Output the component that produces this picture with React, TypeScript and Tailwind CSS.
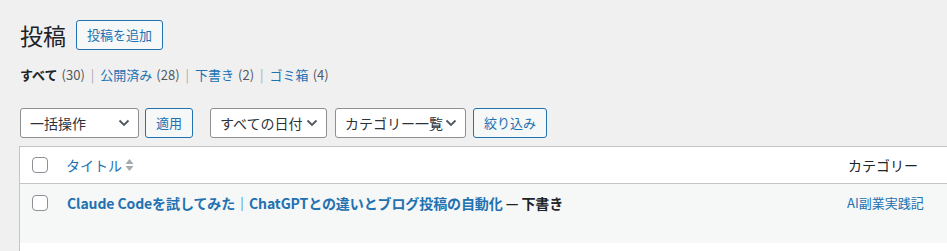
const font = { fontFamily: '"Noto Sans CJK JP", "Noto Sans", sans-serif' };

function Chevron() {
  return (
    <svg width="12" height="8" viewBox="0 0 12 8" className="shrink-0">
      <path d="M1.5 1.5 L6 6 L10.5 1.5" fill="none" stroke="#50575e" strokeWidth="1.8" />
    </svg>
  );
}

function Select({ label, width }: { label: string; width: string }) {
  return (
    <div
      className={`flex h-[30px] items-center justify-between whitespace-nowrap rounded-[3px] border border-[#8c8f94] bg-white pl-[9px] pr-[8px] text-[14px] text-[#2c3338] ${width}`}
    >
      <span>{label}</span>
      <Chevron />
    </div>
  );
}

function Button({ label }: { label: string }) {
  return (
    <div className="flex h-[30px] items-center justify-center whitespace-nowrap rounded-[3px] border border-[#2271b1] bg-[#f6f7f7] text-[13px] text-[#2271b1]">
      {label}
    </div>
  );
}

function Checkbox() {
  return <div className="h-4 w-4 shrink-0 rounded-[4px] border border-[#8c8f94] bg-white" />;
}

export default function App() {
  return (
    <div className="h-[251px] w-[947px] overflow-hidden bg-[#f0f0f1] pl-[20px]" style={font}>
      <div className="flex items-center gap-[10px] pt-[20px]">
        <h1 className="text-[23px] leading-[29px] text-[#1d2327]">投稿</h1>
        <div className="flex h-[30px] items-center rounded-[3px] border border-[#2271b1] bg-[#f6f7f7] px-[10px] text-[13px] text-[#2271b1]">
          投稿を追加
        </div>
      </div>

      <div className="mt-[15px] flex items-center whitespace-nowrap text-[13px] leading-[20px] text-[#50575e]">
        <span className="font-bold text-[#1d2327]">すべて</span>
        <span className="ml-1">(30)</span>
        <span className="mx-[6px] text-[#a7aaad]">|</span>
        <span className="text-[#2271b1]">公開済み</span>
        <span className="ml-1">(28)</span>
        <span className="mx-[6px] text-[#a7aaad]">|</span>
        <span className="text-[#2271b1]">下書き</span>
        <span className="ml-1">(2)</span>
        <span className="mx-[6px] text-[#a7aaad]">|</span>
        <span className="text-[#2271b1]">ゴミ箱</span>
        <span className="ml-1">(4)</span>
      </div>

      <div className="mt-[23px] flex items-center">
        <Select label="一括操作" width="w-[119px]" />
        <div className="ml-[6px] w-[48px]">
          <Button label="適用" />
        </div>
        <div className="ml-[17px]">
          <Select label="すべての日付" width="w-[117px]" />
        </div>
        <div className="ml-[8px]">
          <Select label="カテゴリー一覧" width="w-[131px]" />
        </div>
        <div className="ml-[7px] w-[74px]">
          <Button label="絞り込み" />
        </div>
      </div>

      <div className="-ml-[1px] mt-[8px] border-l border-t border-[#c3c4c7] bg-white">
        <div className="flex h-[37px] items-center border-b border-[#c3c4c7] bg-white">
          <div className="pl-[12px]">
            <Checkbox />
          </div>
          <div className="ml-[18px] flex items-center gap-[3px] text-[14px] text-[#2271b1]">
            <span>タイトル</span>
            <svg width="9" height="14" viewBox="0 0 9 14">
              <path d="M4.5 1 L8.5 6 L0.5 6 Z" fill="#a7aaad" />
              <path d="M4.5 13 L8.5 8 L0.5 8 Z" fill="#a7aaad" />
            </svg>
          </div>
          <div className="ml-auto w-[99px] text-[14px] text-[#1d2327]">カテゴリー</div>
        </div>
        <div className="h-[59px] bg-[#f6f7f7]">
          <div className="flex items-start pt-[11px]">
            <div className="pl-[12px]">
              <Checkbox />
            </div>
            <div className="ml-[19px] whitespace-nowrap text-[14px] font-semibold leading-[16px] tracking-[-0.1px] text-[#2271b1]">
              Claude Codeを試してみた｜ChatGPTとの違いとブログ投稿の自動化
              <span className="text-[#1d2327]"> — 下書き</span>
            </div>
            <div className="ml-auto w-[100px] text-[13px] leading-[16px] text-[#2271b1]">
              AI副業実践記
            </div>
          </div>
        </div>
        <div className="h-[20px] bg-white" />
      </div>
    </div>
  );
}
